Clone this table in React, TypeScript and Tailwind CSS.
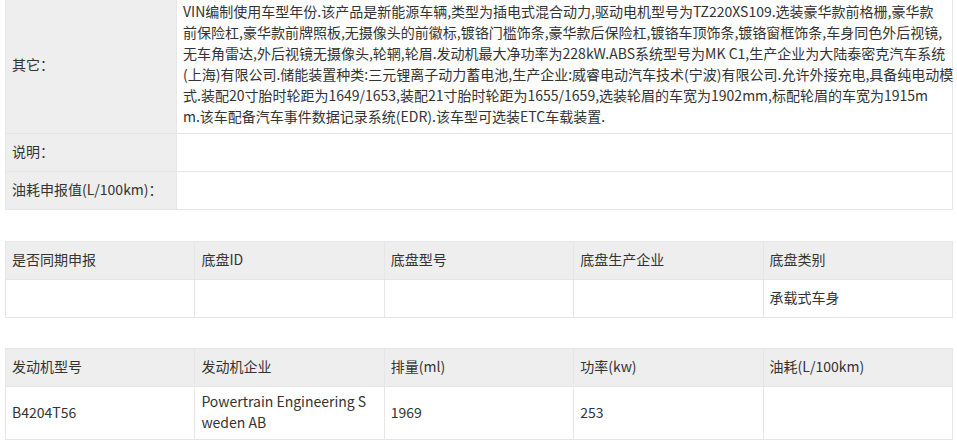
import React from "react";

// 车辆参数表（其它说明 / 底盘 / 发动机）

const otherLines = [
	"VIN编制使用车型年份.该产品是新能源车辆,类型为插电式混合动力,驱动电机型号为TZ220XS109.选装豪华款前格栅,豪华款",
	"前保险杠,豪华款前牌照板,无摄像头的前徽标,镀铬门槛饰条,豪华款后保险杠,镀铬车顶饰条,镀铬窗框饰条,车身同色外后视镜,",
	"无车角雷达,外后视镜无摄像头,轮辋,轮眉.发动机最大净功率为228kW.ABS系统型号为MK C1,生产企业为大陆泰密克汽车系统",
	"(上海)有限公司.储能装置种类:三元锂离子动力蓄电池,生产企业:威睿电动汽车技术(宁波)有限公司.允许外接充电,具备纯电动模",
	"式.装配20寸胎时轮距为1649/1653,装配21寸胎时轮距为1655/1659,选装轮眉的车宽为1902mm,标配轮眉的车宽为1915m",
	"m.该车配备汽车事件数据记录系统(EDR).该车型可选装ETC车载装置.",
];

const chassisHead = ["是否同期申报", "底盘ID", "底盘型号", "底盘生产企业", "底盘类别"];
const chassisRow: React.ReactNode[] = ["", "", "", "", "承载式车身"];

const engineHead = ["发动机型号", "发动机企业", "排量(ml)", "功率(kw)", "油耗(L/100km)"];
const engineRow: React.ReactNode[] = [
	"B4204T56",
	<>
		Powertrain Engineering S
		<br />
		weden AB
	</>,
	"1969",
	"253",
	"",
];

const cell = "border border-[#e6e6e6] px-[6px] pt-[4px] pb-[6px] h-[38px] align-middle text-left font-normal";

function GridTable({ head, row, className }: { head: string[]; row: React.ReactNode[]; className?: string }) {
	return (
		<table className={`w-[948px] table-fixed border-collapse ${className ?? ""}`}>
			<tbody>
				<tr className="bg-[#eeeeee]">
					{head.map((h) => (
						<th key={h} className={cell}>
							{h}
						</th>
					))}
				</tr>
				<tr className="bg-white">
					{row.map((v, i) => (
						<td key={i} className={`${cell} break-all`}>
							{v}
						</td>
					))}
				</tr>
			</tbody>
		</table>
	);
}

export default function App() {
	return (
		<div
			className="min-h-[440px] bg-white pl-[5px] text-[14px] leading-[21px] text-[#333333] overflow-hidden"
			style={{ fontFamily: '"Noto Sans CJK SC", "Noto Sans", sans-serif' }}
		>
			{/* 其它信息 */}
			<table className="-mt-[4px] w-[948px] table-fixed border-collapse">
				<colgroup>
					<col className="w-[171px]" />
					<col />
				</colgroup>
				<tbody>
					<tr>
						<td className={`${cell} bg-[#eeeeee]`}>其它：</td>
						<td className={`${cell} bg-white`}>
							{otherLines.map((l) => (
								<span key={l} className="block whitespace-nowrap">
									{l}
								</span>
							))}
						</td>
					</tr>
					<tr>
						<td className={`${cell} bg-[#eeeeee]`}>说明：</td>
						<td className={`${cell} bg-white`} />
					</tr>
					<tr>
						<td className={`${cell} bg-[#eeeeee]`}>油耗申报值(L/100km)：</td>
						<td className={`${cell} bg-white`} />
					</tr>
				</tbody>
			</table>

			{/* 底盘 */}
			<GridTable head={chassisHead} row={chassisRow} className="mt-[31px]" />

			{/* 发动机 */}
			<GridTable head={engineHead} row={engineRow} className="mt-[30px]" />
		</div>
	);
}
